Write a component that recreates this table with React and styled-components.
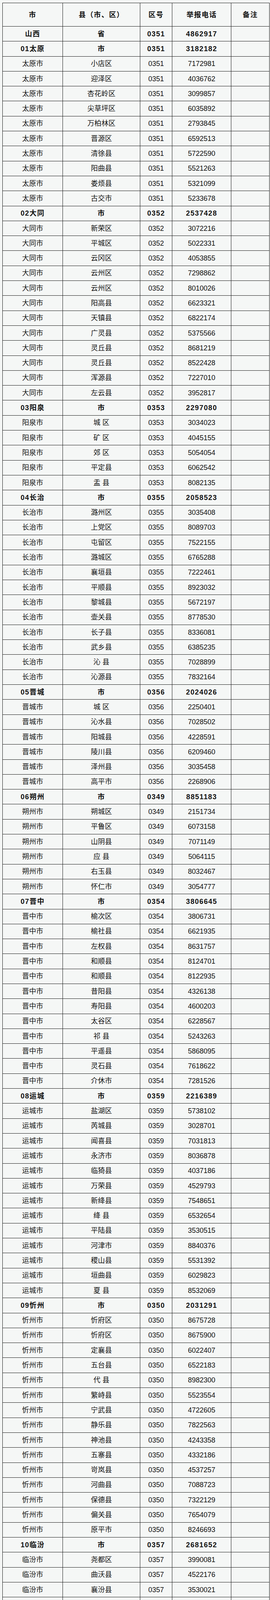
import React from 'react';
import styled, { createGlobalStyle } from 'styled-components';

const GlobalStyle = createGlobalStyle`
  html, body {
    margin: 0;
    padding: 0;
    background: #f5f7f6;
    overflow: hidden;
  }
  body {
    font-family: "Liberation Sans", "Noto Sans CJK SC", sans-serif;
    color: #111;
  }
`;

const Page = styled.div`
  padding: 7px 1px 10px 6px;
`;

const Table = styled.div`
  width: 684px;
  border-top: 1px solid #1b1b1b;
  border-left: 1px solid #1b1b1b;
  box-sizing: border-box;
`;

const RowBox = styled.div`
  display: grid;
  grid-template-columns: 154px 198px 82px 151px 98px;
  height: ${p => p.$h}px;
  overflow: hidden;
`;

const Cell = styled.div`
  display: flex;
  align-items: center;
  justify-content: center;
  height: 100%;
  box-sizing: border-box;
  border-right: 1px solid #1b1b1b;
  border-bottom: 1px solid #1b1b1b;
  font-size: 18px;
  line-height: 20px;
  white-space: pre;
  overflow: hidden;
  font-weight: ${p => (p.$bold ? 700 : 400)};
  letter-spacing: ${p => (p.$bold ? '1.4px' : '0')};
  color: #111;
`;

const groups = [
  { city: '山西', kind: '省', code: '0351', tel: '4862917', items: [] },
  {
    city: '01太原', kind: '市', code: '0351', tel: '3182182', name: '太原市',
    items: [
      ['小店区', '7172981'], ['迎泽区', '4036762'], ['杏花岭区', '3099857'], ['尖草坪区', '6035892'],
      ['万柏林区', '2793845'], ['晋源区', '6592513'], ['清徐县', '5722590'], ['阳曲县', '5521263'],
      ['娄烦县', '5321099'], ['古交市', '5233678'],
    ],
  },
  {
    city: '02大同', kind: '市', code: '0352', tel: '2537428', name: '大同市',
    items: [
      ['新荣区', '3072216'], ['平城区', '5022331'], ['云冈区', '4053855'], ['云州区', '7298862'],
      ['云州区', '8010026'], ['阳高县', '6623321'], ['天镇县', '6822174'], ['广灵县', '5375566'],
      ['灵丘县', '8681219'], ['灵丘县', '8522428'], ['浑源县', '7227010'], ['左云县', '3952817'],
    ],
  },
  {
    city: '03阳泉', kind: '市', code: '0353', tel: '2297080', name: '阳泉市',
    items: [
      ['城 区', '3034023'], ['矿 区', '4045155'], ['郊 区', '5054054'], ['平定县', '6062542'],
      ['盂 县', '8082135'],
    ],
  },
  {
    city: '04长治', kind: '市', code: '0355', tel: '2058523', name: '长治市',
    items: [
      ['潞州区', '3035408'], ['上党区', '8089703'], ['屯留区', '7522155'], ['潞城区', '6765288'],
      ['襄垣县', '7222461'], ['平顺县', '8923032'], ['黎城县', '5672197'], ['壶关县', '8778530'],
      ['长子县', '8336081'], ['武乡县', '6385235'], ['沁 县', '7028899'], ['沁源县', '7832164'],
    ],
  },
  {
    city: '05晋城', kind: '市', code: '0356', tel: '2024026', name: '晋城市',
    items: [
      ['城 区', '2250401'], ['沁水县', '7028502'], ['阳城县', '4228591'], ['陵川县', '6209460'],
      ['泽州县', '3035458'], ['高平市', '2268906'],
    ],
  },
  {
    city: '06朔州', kind: '市', code: '0349', tel: '8851183', name: '朔州市',
    items: [
      ['朔城区', '2151734'], ['平鲁区', '6073158'], ['山阴县', '7071149'], ['应 县', '5064115'],
      ['右玉县', '8032467'], ['怀仁市', '3054777'],
    ],
  },
  {
    city: '07晋中', kind: '市', code: '0354', tel: '3806645', name: '晋中市',
    items: [
      ['榆次区', '3806731'], ['榆社县', '6621935'], ['左权县', '8631757'], ['和顺县', '8124701'],
      ['和顺县', '8122935'], ['昔阳县', '4326138'], ['寿阳县', '4600203'], ['太谷区', '6228567'],
      ['祁 县', '5243263'], ['平遥县', '5868095'], ['灵石县', '7618622'], ['介休市', '7281526'],
    ],
  },
  {
    city: '08运城', kind: '市', code: '0359', tel: '2216389', name: '运城市',
    items: [
      ['盐湖区', '5738102'], ['芮城县', '3028701'], ['闻喜县', '7031813'], ['永济市', '8036878'],
      ['临猗县', '4037186'], ['万荣县', '4529793'], ['新绛县', '7548651'], ['绛 县', '6532654'],
      ['平陆县', '3530515'], ['河津市', '8840376'], ['稷山县', '5531392'], ['垣曲县', '6029823'],
      ['夏 县', '8532069'],
    ],
  },
  {
    city: '09忻州', kind: '市', code: '0350', tel: '2031291', name: '忻州市',
    items: [
      ['忻府区', '8675728'], ['忻府区', '8675900'], ['定襄县', '6022407'], ['五台县', '6522183'],
      ['代 县', '8982300'], ['繁峙县', '5523554'], ['宁武县', '4722605'], ['静乐县', '7822563'],
      ['神池县', '4243358'], ['五寨县', '4332186'], ['岢岚县', '4537257'], ['河曲县', '7088723'],
      ['保德县', '7322129'], ['偏关县', '7654079'], ['原平市', '8246693'],
    ],
  },
  {
    city: '10临汾', kind: '市', code: '0357', tel: '2681652', name: '临汾市',
    items: [
      ['尧都区', '3990081'], ['曲沃县', '4522176'], ['襄汾县', '3530021'], ['翼城县', '4939631'],
      ['洪洞县', '6226148'], ['古 县', '8324100'], ['安泽县', '8523403'], ['浮山县', '8166678'],
      ['吉 县', '7176112'], ['乡宁县', '6868206'], ['大宁县', '7725599'], ['隰 县', '7327399'],
      ['永和县', '6015096'], ['永和县', '7558000'], ['蒲 县', '5322214'], ['汾西县', '5126140'],
      ['侯马市', '4224704'], ['霍州市', '5625171'],
    ],
  },
  {
    city: '11吕梁', kind: '市', code: '0358', tel: '8211680', name: '吕梁市',
    items: [
      ['离石区', '8218500'], ['文水县', '3089110'], ['交城县', '3522461'], ['兴 县', '6450195'],
      ['兴 县', '6450213'], ['临 县', '4423567'], ['临 县', '4582382'], ['临 县', '4583380'],
      ['柳林县', '4012246'], ['石楼县', '5722478'], ['岚 县', '6722259'], ['方山县', '6027389'],
      ['方山县', '6022237'], ['中阳县', '5300506'], ['交口县', '5440111'], ['孝义市', '7607815'],
      ['汾阳市', '7228671'],
    ],
  },
];

const ROW_H = 38.3;

function Row({ cells, bold, h }) {
  return (
    <RowBox $h={h}>
      {cells.map((c, i) => (
        <Cell key={i} $bold={bold}>{c}</Cell>
      ))}
    </RowBox>
  );
}

export default function App() {
  return (
    <Page>
      <GlobalStyle />
      <Table>
        <Row bold h={60} cells={['市', '县（市、区）', '区号', '举报电话', '备注']} />
        {groups.map(g => (
          <React.Fragment key={g.city}>
            <Row bold h={ROW_H} cells={[g.city, g.kind, g.code, g.tel, '']} />
            {g.items.map(([county, tel], i) => (
              <Row key={i} h={ROW_H} cells={[g.name, county, g.code, tel, '']} />
            ))}
          </React.Fragment>
        ))}
      </Table>
    </Page>
  );
}
